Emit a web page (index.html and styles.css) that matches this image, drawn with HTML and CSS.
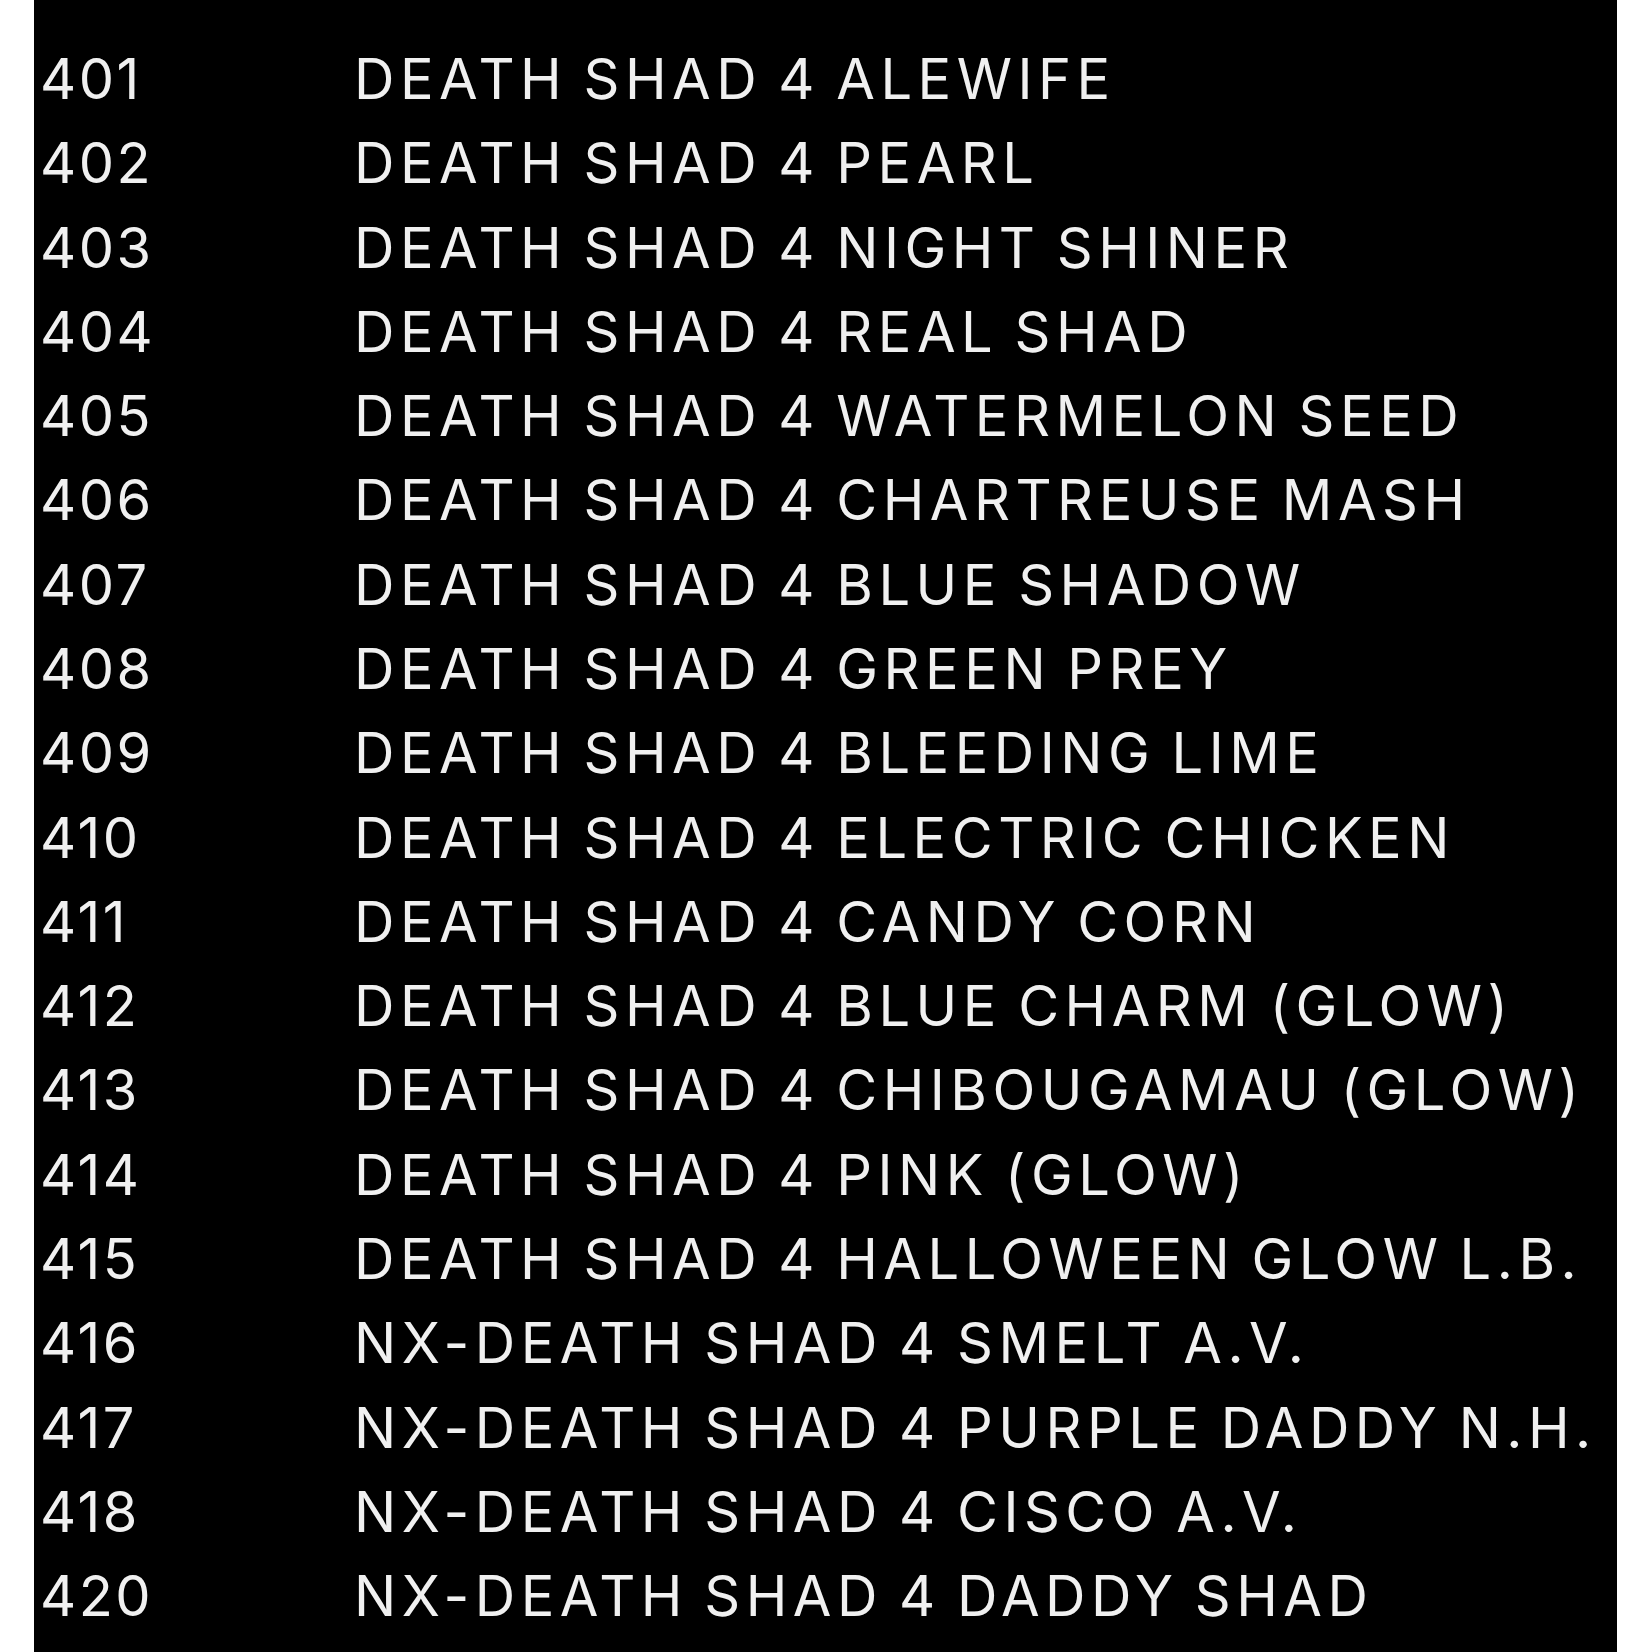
FILE: index.html
```html
<!DOCTYPE html>
<html>
<head>
<meta charset="utf-8">
<link rel="stylesheet" href="styles.css">
</head>
<body>
<div class="sheet">
  <div class="list">
    <div class="row"><span class="code">401</span><span class="name">DEATH SHAD 4 ALEWIFE</span></div>
    <div class="row"><span class="code">402</span><span class="name">DEATH SHAD 4 PEARL</span></div>
    <div class="row"><span class="code">403</span><span class="name">DEATH SHAD 4 NIGHT SHINER</span></div>
    <div class="row"><span class="code">404</span><span class="name">DEATH SHAD 4 REAL SHAD</span></div>
    <div class="row"><span class="code">405</span><span class="name">DEATH SHAD 4 WATERMELON SEED</span></div>
    <div class="row"><span class="code">406</span><span class="name">DEATH SHAD 4 CHARTREUSE MASH</span></div>
    <div class="row"><span class="code">407</span><span class="name">DEATH SHAD 4 BLUE SHADOW</span></div>
    <div class="row"><span class="code">408</span><span class="name">DEATH SHAD 4 GREEN PREY</span></div>
    <div class="row"><span class="code">409</span><span class="name">DEATH SHAD 4 BLEEDING LIME</span></div>
    <div class="row"><span class="code">410</span><span class="name">DEATH SHAD 4 ELECTRIC CHICKEN</span></div>
    <div class="row"><span class="code">411</span><span class="name">DEATH SHAD 4 CANDY CORN</span></div>
    <div class="row"><span class="code">412</span><span class="name">DEATH SHAD 4 BLUE CHARM (GLOW)</span></div>
    <div class="row"><span class="code">413</span><span class="name">DEATH SHAD 4 CHIBOUGAMAU (GLOW)</span></div>
    <div class="row"><span class="code">414</span><span class="name">DEATH SHAD 4 PINK (GLOW)</span></div>
    <div class="row"><span class="code">415</span><span class="name">DEATH SHAD 4 HALLOWEEN GLOW L.B.</span></div>
    <div class="row"><span class="code">416</span><span class="name">NX-DEATH SHAD 4 SMELT A.V.</span></div>
    <div class="row"><span class="code">417</span><span class="name">NX-DEATH SHAD 4 PURPLE DADDY N.H.</span></div>
    <div class="row"><span class="code">418</span><span class="name">NX-DEATH SHAD 4 CISCO A.V.</span></div>
    <div class="row"><span class="code">420</span><span class="name">NX-DEATH SHAD 4 DADDY SHAD</span></div>
  </div>
</div>
</body>
</html>
```
FILE: styles.css
```css
html, body {
  margin: 0;
  padding: 0;
  background: #ffffff;
}
.sheet {
  margin-left: 34px;
  width: 1583px;
  height: 1652px;
  background: #000000;
  overflow: hidden;
}
.list {
  padding-top: 37px;
  padding-left: 6px;
  font-family: Inter, "Liberation Sans", sans-serif;
  font-size: 56px;
  line-height: 84.28px;
  color: #f0f0f0;
}
.row {
  display: grid;
  grid-template-columns: 314px 1fr;
  white-space: nowrap;
}
.code {
  letter-spacing: 2.5px;
}
.name {
  letter-spacing: 5.5px;
  word-spacing: -5px;
}
```
